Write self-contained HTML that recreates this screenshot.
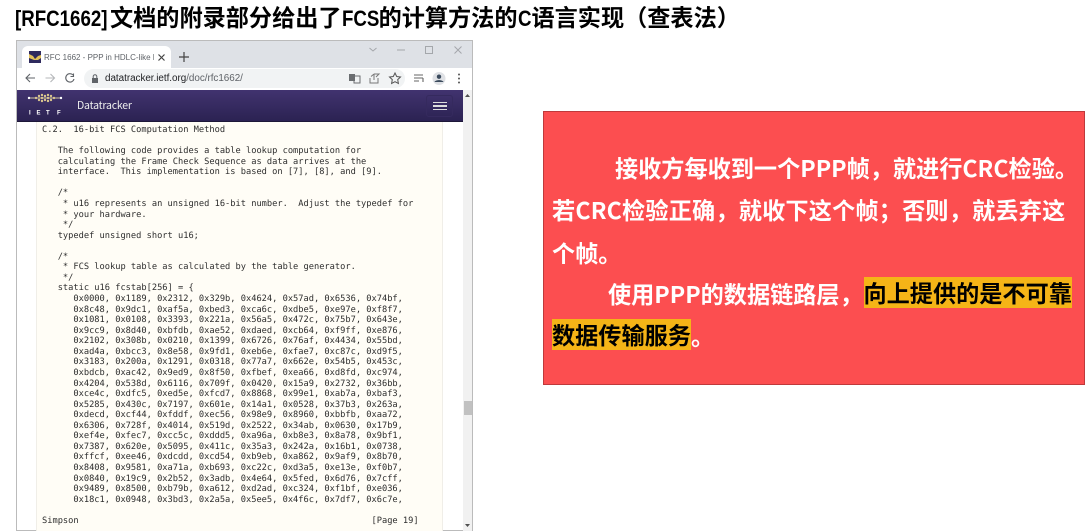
<!DOCTYPE html>
<html><head><meta charset="utf-8"><style>
html,body{margin:0;padding:0;background:#fff}
body{width:1091px;height:531px;overflow:hidden;position:relative;font-family:"Liberation Sans","Noto Sans CJK SC",sans-serif}
.a{position:absolute}
#title{left:15px;top:1px;height:30px;line-height:30px;font-size:23.17px;font-weight:bold;color:#000;white-space:nowrap;font-family:"Noto Sans CJK SC",sans-serif}
.lat{display:inline-block;font-family:"Liberation Sans",sans-serif;font-size:22px;transform:scaleX(.85);transform-origin:left center;overflow:visible;vertical-align:baseline}
#frame{left:16px;top:40px;width:457px;height:491px;background:#fff;overflow:hidden;filter:blur(.3px);box-shadow:inset 0 0 0 1px #bbb}
#frame .a{position:absolute}
pre{margin:0;position:absolute;left:26px;top:85px;font:8.7px/10.57px "DejaVu Sans Mono",monospace;color:#2e2e2e;white-space:pre;text-rendering:geometricPrecision}
#box{left:543px;top:111px;width:540px;height:272px;background:#fc4e50;border:1px solid #bf393b}
.l{position:absolute;white-space:nowrap;font:bold 23.17px/32px "Noto Sans CJK SC",sans-serif;color:#fff;height:32px}
.hl{background:#f5b417;color:#000;display:inline-block;height:31px;line-height:30px}
</style></head><body>
<div id="title" class="a"><span class="lat" style="width:95px">[RFC1662]</span>文档的附录部分给出了<span class="lat" style="width:37px">FCS</span>的计算方法的<span class="lat" style="width:14px">C</span>语言实现（查表法）</div>

<div id="frame" class="a">
 <div class="a" style="left:1px;top:1px;width:455px;height:27px;background:#dee1e6"></div>
 <div class="a" style="left:6px;top:6px;width:149px;height:23px;background:#fff;border-radius:6px 6px 0 0"></div>
 <svg class="a" style="left:13px;top:11px" width="12" height="12" viewBox="0 0 12 12"><rect width="12" height="12" fill="#2f2a5e"/><path d="M0 3l4 2 2 3 3-3 3-1v3l-3 2H5L0 7z" fill="#e3c15a"/></svg>
 <div class="a" style="left:28px;top:11px;width:110px;height:13px;overflow:hidden;font:8px/13px 'Liberation Sans',sans-serif;color:#5f6368;white-space:nowrap">RFC 1662 - PPP in HDLC-like F</div>
 <svg class="a" style="left:141px;top:13px" width="9" height="9" viewBox="0 0 9 9"><path d="M1.500 1.500l6 6M7.500 1.500l-6 6" stroke="#444" stroke-width="1.200"/></svg>
 <svg class="a" style="left:162px;top:11px" width="12" height="12" viewBox="0 0 12 12"><path d="M6 1v10M1 6h10" stroke="#444" stroke-width="1.200"/></svg>
 <svg class="a" style="left:352px;top:3px" width="100" height="14" viewBox="0 0 100 14"><path d="M1.500 5L5 8l3.500-3M29 7h8" stroke="#a4a7ab" fill="none"/><rect x="57.500" y="3.500" width="7" height="7" stroke="#a4a7ab" fill="none"/><path d="M86.500 3.500l7 7M93.500 3.500l-7 7" stroke="#a4a7ab" fill="none"/></svg>
 <div class="a" style="left:1px;top:28px;width:455px;height:22px;background:#fff"></div>
 <div class="a" style="left:68px;top:29px;width:321px;height:19px;background:#f1f3f4;border-radius:10px"></div>
 <svg class="a" style="left:8px;top:31px" width="70" height="14" viewBox="0 0 70 14"><path d="M2 7h9M6 3L2 7l4 4" stroke="#5f6368" stroke-width="1.100" fill="none"/><path d="M21.500 7h9M26.500 3l4 4-4 4" stroke="#b5b7ba" stroke-width="1.100" fill="none"/><path d="M49 4a4.200 4.200 0 1 0 1 4M49.500 2.500v3h-3" stroke="#5f6368" stroke-width="1.100" fill="none"/></svg>
 <svg class="a" style="left:74px;top:33px" width="10" height="11" viewBox="0 0 10 11"><rect x="2" y="5" width="6" height="5" fill="#5f6368"/><path d="M3.200 5V3.500a1.800 1.800 0 0 1 3.600 0V5" stroke="#5f6368" fill="none"/></svg>
 <div class="a" style="left:89px;top:31px;font:9.900px/15px 'Liberation Sans',sans-serif;color:#202124;white-space:nowrap;letter-spacing:-.03px">datatracker.ietf.org<span style="color:#5f6368">/doc/rfc1662/</span></div>
 <svg class="a" style="left:332px;top:31px" width="120" height="15" viewBox="0 0 120 15"><rect x="1" y="3" width="6" height="7" fill="#6a6d70"/><rect x="6" y="5" width="6" height="7" fill="none" stroke="#6a6d70"/><path d="M22 7v5h8V7M26 9V3M26 3l-3 2.500M26 3h5l-3 3" stroke="#777" fill="none"/><path d="M47 2l1.700 3.500 3.800.5-2.800 2.600.7 3.900L47 10.700l-3.400 1.800.7-3.900L41.500 6l3.800-.5z" stroke="#555" fill="none"/><path d="M66 4h9M66 7h9M66 10h5M75 7v4" stroke="#666" stroke-width="1.100" fill="none"/><circle cx="91" cy="7.500" r="6.500" fill="#dfe1e5"/><circle cx="91" cy="5.700" r="2.200" fill="#3a4a5c"/><path d="M86.500 11c1-2.500 8-2.500 9 0z" fill="#3a4a5c"/><circle cx="111" cy="3.500" r="1" fill="#555"/><circle cx="111" cy="7.500" r="1" fill="#555"/><circle cx="111" cy="11.500" r="1" fill="#555"/></svg>
 <div class="a" style="left:1px;top:50px;width:446px;height:32px;background:linear-gradient(#41336f,#2b2252);border-bottom:1px solid #1d1738;box-sizing:border-box"></div>
 <svg class="a" style="left:10px;top:52px" width="44" height="28" viewBox="0 0 44 28"><path d="M2 6h33" stroke="#cfc3a0" stroke-width="1"/><g fill="#d9c58e"><circle cx="10" cy="6" r="1.200"/><circle cx="13" cy="4" r="1.200"/><circle cx="13" cy="8" r="1.200"/><circle cx="16" cy="3" r="1.200"/><circle cx="16" cy="6" r="1.200"/><circle cx="16" cy="9" r="1.200"/><circle cx="19" cy="4" r="1.200"/><circle cx="19" cy="8" r="1.200"/><circle cx="22" cy="3" r="1.200"/><circle cx="22" cy="6" r="1.200"/><circle cx="22" cy="9" r="1.200"/><circle cx="25" cy="4" r="1.200"/><circle cx="25" cy="8" r="1.200"/><circle cx="28" cy="6" r="1.200"/></g><circle cx="3" cy="6" r="1.200" fill="#fff"/><circle cx="35" cy="6" r="1.200" fill="#fff"/><g font-family="Liberation Sans,sans-serif" font-weight="bold" font-size="6" fill="#fff"><text x="3" y="22.500">I</text><text x="10.500" y="22.500">E</text><text x="20" y="22.500">T</text><text x="31" y="22.500">F</text></g></svg>
 <div class="a" style="left:61px;top:57px;font:10.500px/17px 'Noto Sans CJK SC','Liberation Sans',sans-serif;color:#eee;letter-spacing:-.2px">Datatracker</div>
 <div class="a" style="left:410px;top:55px;width:25px;height:20px;border:1px solid #352a5e;border-radius:3px"></div>
 <div class="a" style="left:417px;top:61.500px;width:14px;height:1.500px;background:#ddd"></div>
 <div class="a" style="left:417px;top:65px;width:14px;height:1.500px;background:#ddd"></div>
 <div class="a" style="left:417px;top:68.500px;width:14px;height:1.500px;background:#ddd"></div>
 <div class="a" style="left:19.500px;top:82px;width:407.500px;height:409px;background:#fffdf6;border:solid #f0eee8;border-width:0 1px;box-sizing:border-box"></div>
 <div class="a" style="left:447px;top:50px;width:9px;height:441px;background:#f1f1f1"></div>
 <div class="a" style="left:447.500px;top:361px;width:9px;height:14px;background:#c1c1c1"></div>
 <svg class="a" style="left:447px;top:52px" width="9" height="6"><path d="M2 5l2.500-3L7 5z" fill="#505050"/></svg>
 <svg class="a" style="left:447px;top:483px" width="9" height="6"><path d="M2 1l2.500 3L7 1z" fill="#505050"/></svg>
 <div class="a" style="left:456px;top:0;width:1px;height:491px;background:#bbb"></div>
<pre>C.2.  16-bit FCS Computation Method

   The following code provides a table lookup computation for
   calculating the Frame Check Sequence as data arrives at the
   interface.  This implementation is based on [7], [8], and [9].

   /*
    * u16 represents an unsigned 16-bit number.  Adjust the typedef for
    * your hardware.
    */
   typedef unsigned short u16;

   /*
    * FCS lookup table as calculated by the table generator.
    */
   static u16 fcstab[256] = {
      0x0000, 0x1189, 0x2312, 0x329b, 0x4624, 0x57ad, 0x6536, 0x74bf,
      0x8c48, 0x9dc1, 0xaf5a, 0xbed3, 0xca6c, 0xdbe5, 0xe97e, 0xf8f7,
      0x1081, 0x0108, 0x3393, 0x221a, 0x56a5, 0x472c, 0x75b7, 0x643e,
      0x9cc9, 0x8d40, 0xbfdb, 0xae52, 0xdaed, 0xcb64, 0xf9ff, 0xe876,
      0x2102, 0x308b, 0x0210, 0x1399, 0x6726, 0x76af, 0x4434, 0x55bd,
      0xad4a, 0xbcc3, 0x8e58, 0x9fd1, 0xeb6e, 0xfae7, 0xc87c, 0xd9f5,
      0x3183, 0x200a, 0x1291, 0x0318, 0x77a7, 0x662e, 0x54b5, 0x453c,
      0xbdcb, 0xac42, 0x9ed9, 0x8f50, 0xfbef, 0xea66, 0xd8fd, 0xc974,
      0x4204, 0x538d, 0x6116, 0x709f, 0x0420, 0x15a9, 0x2732, 0x36bb,
      0xce4c, 0xdfc5, 0xed5e, 0xfcd7, 0x8868, 0x99e1, 0xab7a, 0xbaf3,
      0x5285, 0x430c, 0x7197, 0x601e, 0x14a1, 0x0528, 0x37b3, 0x263a,
      0xdecd, 0xcf44, 0xfddf, 0xec56, 0x98e9, 0x8960, 0xbbfb, 0xaa72,
      0x6306, 0x728f, 0x4014, 0x519d, 0x2522, 0x34ab, 0x0630, 0x17b9,
      0xef4e, 0xfec7, 0xcc5c, 0xddd5, 0xa96a, 0xb8e3, 0x8a78, 0x9bf1,
      0x7387, 0x620e, 0x5095, 0x411c, 0x35a3, 0x242a, 0x16b1, 0x0738,
      0xffcf, 0xee46, 0xdcdd, 0xcd54, 0xb9eb, 0xa862, 0x9af9, 0x8b70,
      0x8408, 0x9581, 0xa71a, 0xb693, 0xc22c, 0xd3a5, 0xe13e, 0xf0b7,
      0x0840, 0x19c9, 0x2b52, 0x3adb, 0x4e64, 0x5fed, 0x6d76, 0x7cff,
      0x9489, 0x8500, 0xb79b, 0xa612, 0xd2ad, 0xc324, 0xf1bf, 0xe036,
      0x18c1, 0x0948, 0x3bd3, 0x2a5a, 0x5ee5, 0x4f6c, 0x7df7, 0x6c7e,

Simpson                                                        [Page 19]</pre>
</div>

<div id="box" class="a"></div>
<div class="l" style="left:615px;top:151px">接收方每收到一个PPP帧，就进行CRC检验。</div>
<div class="l" style="left:552px;top:193px;letter-spacing:.18px">若CRC检验正确，就收下这个帧；否则，就丢弃这</div>
<div class="l" style="left:552px;top:236px">个帧。</div>
<div class="l" style="left:608px;top:277px">使用PPP的数据链路层，<span class="a hl" style="left:255.500px;top:0">向上提供的是不可靠</span></div>
<div class="l" style="left:552px;top:319px"><span class="hl" style="vertical-align:top">数据传输服务</span>。</div>
</body></html>
